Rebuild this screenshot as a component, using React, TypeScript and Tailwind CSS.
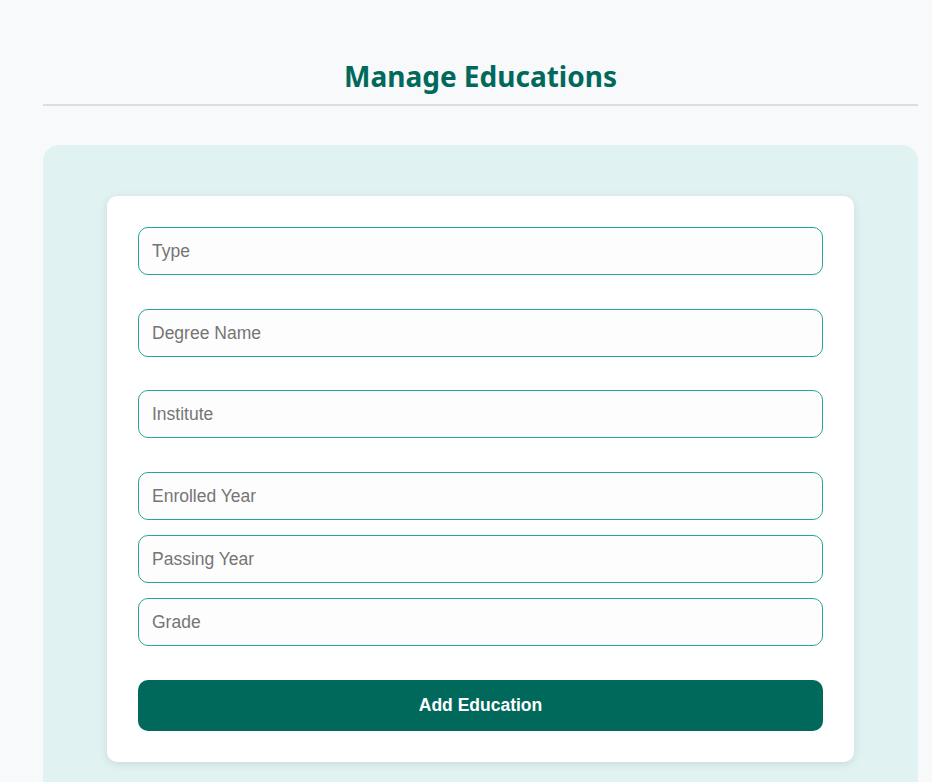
import { useState } from "react";

const FIELDS = [
  { key: "type", label: "Type", gap: "mb-[34px]" },
  { key: "degree", label: "Degree Name", gap: "mb-[33px]" },
  { key: "institute", label: "Institute", gap: "mb-[34px]" },
  { key: "enrolled", label: "Enrolled Year", gap: "mb-[15px]" },
  { key: "passing", label: "Passing Year", gap: "mb-[15px]" },
  { key: "grade", label: "Grade", gap: "mb-[34px]" },
];

export default function App() {
  const [values, setValues] = useState<Record<string, string>>({});

  return (
    <div className="min-h-screen w-full bg-[#f8f9fa] font-['Liberation_Sans',Arial,sans-serif]">
      <div className="ml-[43px] w-[875px] pt-[57px]">
        <h1 className="text-center font-['Noto_Sans',sans-serif] text-[28px] font-bold leading-[38px] text-[#00695c]">
          Manage Educations
        </h1>
        <div className="mt-[9px] h-[2px] bg-[#dcdde0]" />

        <div className="mt-[39px] rounded-t-[16px] bg-[#e0f2f1] px-[64px] pt-[51px] pb-[40px]">
          <form
            className="rounded-[10px] bg-white p-[31px] shadow-[0_2px_10px_rgba(0,0,0,0.1)]"
            onSubmit={(e) => e.preventDefault()}
          >
            {FIELDS.map((f) => (
              <input
                key={f.key}
                value={values[f.key] ?? ""}
                onChange={(e) => setValues((v) => ({ ...v, [f.key]: e.target.value }))}
                placeholder={f.label}
                className={`block h-[48px] w-full rounded-[10px] border border-[#26a69a] bg-[#fdfdfd] px-[13px] text-[17.5px] text-[#333] placeholder:text-[#757575] outline-none ${f.gap}`}
              />
            ))}
            <button
              type="submit"
              className="block h-[51px] w-full rounded-[10px] bg-[#00695c] text-[17.5px] font-bold text-white"
            >
              Add Education
            </button>
          </form>
        </div>
      </div>
    </div>
  );
}
